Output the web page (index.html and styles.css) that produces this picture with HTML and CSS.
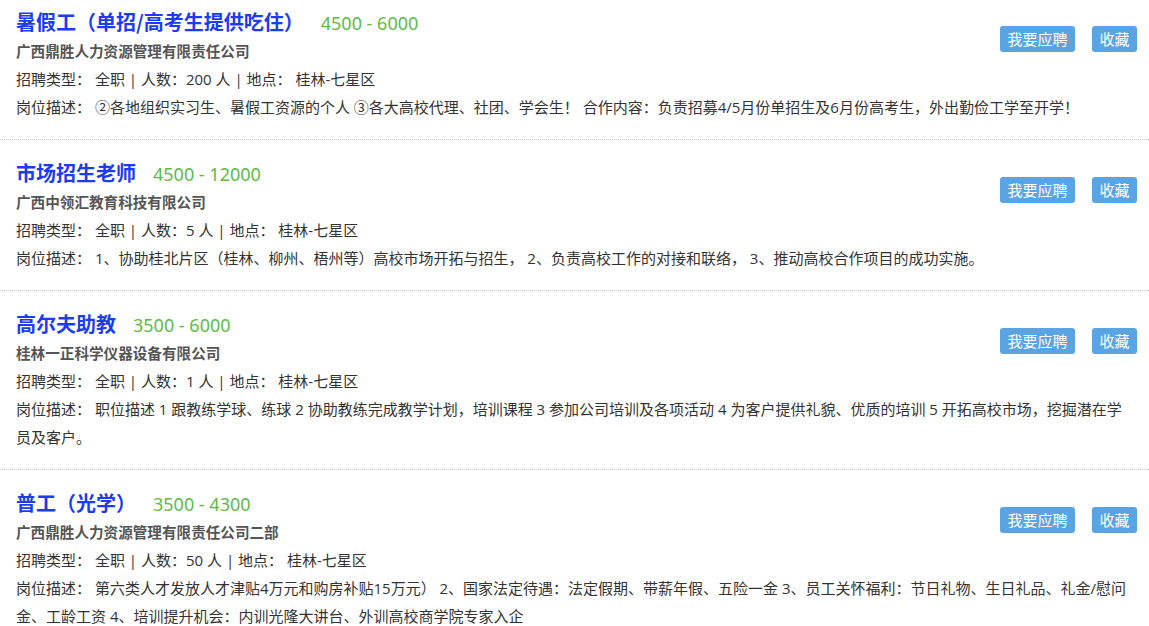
FILE: index.html
```html
<!DOCTYPE html>
<html lang="zh-CN">
<head>
<meta charset="utf-8">
<title>职位列表</title>
<link rel="stylesheet" href="styles.css">
</head>
<body>
<ul class="jobs">
  <li class="job">
    <div class="head">
      <div class="info">
        <div class="title-row"><a class="title">暑假工（单招/高考生提供吃住）</a><span class="salary">4500 - 6000</span></div>
        <div class="company">广西鼎胜人力资源管理有限责任公司</div>
        <div class="meta">招聘类型： 全职 | 人数：200 人 | 地点： 桂林-七星区</div>
      </div>
      <div class="actions"><a class="btn">我要应聘</a><a class="btn">收藏</a></div>
    </div>
    <p class="desc">岗位描述： ②各地组织实习生、暑假工资源的个人 ③各大高校代理、社团、学会生！ 合作内容：负责招募4/5月份单招生及6月份高考生，外出勤俭工学至开学！</p>
  </li>
  <li class="job">
    <div class="head">
      <div class="info">
        <div class="title-row"><a class="title">市场招生老师</a><span class="salary">4500 - 12000</span></div>
        <div class="company">广西中领汇教育科技有限公司</div>
        <div class="meta">招聘类型： 全职 | 人数：5 人 | 地点： 桂林-七星区</div>
      </div>
      <div class="actions"><a class="btn">我要应聘</a><a class="btn">收藏</a></div>
    </div>
    <p class="desc">岗位描述： 1、协助桂北片区（桂林、柳州、梧州等）高校市场开拓与招生， 2、负责高校工作的对接和联络， 3、推动高校合作项目的成功实施。</p>
  </li>
  <li class="job">
    <div class="head">
      <div class="info">
        <div class="title-row"><a class="title">高尔夫助教</a><span class="salary">3500 - 6000</span></div>
        <div class="company">桂林一正科学仪器设备有限公司</div>
        <div class="meta">招聘类型： 全职 | 人数：1 人 | 地点： 桂林-七星区</div>
      </div>
      <div class="actions"><a class="btn">我要应聘</a><a class="btn">收藏</a></div>
    </div>
    <p class="desc">岗位描述： 职位描述 1 跟教练学球、练球 2 协助教练完成教学计划，培训课程 3 参加公司培训及各项活动 4 为客户提供礼貌、优质的培训 5 开拓高校市场，挖掘潜在学员及客户。</p>
  </li>
  <li class="job">
    <div class="head">
      <div class="info">
        <div class="title-row"><a class="title">普工（光学）</a><span class="salary">3500 - 4300</span></div>
        <div class="company">广西鼎胜人力资源管理有限责任公司二部</div>
        <div class="meta">招聘类型： 全职 | 人数：50 人 | 地点： 桂林-七星区</div>
      </div>
      <div class="actions"><a class="btn">我要应聘</a><a class="btn">收藏</a></div>
    </div>
    <p class="desc">岗位描述： 第六类人才发放人才津贴4万元和购房补贴15万元） 2、国家法定待遇：法定假期、带薪年假、五险一金 3、员工关怀福利：节日礼物、生日礼品、礼金/慰问金、工龄工资 4、培训提升机会：内训光隆大讲台、外训高校商学院专家入企</p>
  </li>
</ul>
</body>
</html>
```

FILE: styles.css
```css
html, body {
  margin: 0;
  padding: 0;
  background: #fff;
}
body {
  font-family: "Open Sans", "Noto Sans CJK SC", "Noto Sans", sans-serif;
  color: #333;
  font-size: 15px;
  overflow: hidden;
}
.jobs {
  list-style: none;
  margin: 0;
  padding: 0;
}
.job {
  padding: 18px 12px 18px 16px;
  border-bottom: 1px dotted #c8c8c8;
}
.job:first-child {
  padding-top: 7px;
}
.head {
  display: flex;
  justify-content: space-between;
  align-items: flex-start;
}
.title-row {
  display: flex;
  align-items: baseline;
  height: 30px;
  line-height: 30px;
}
.title {
  font-family: "Noto Sans CJK SC", sans-serif;
  font-size: 20px;
  font-weight: bold;
  color: #1b3cf2;
  text-decoration: none;
}
.salary {
  font-size: 18px;
  color: #5dbb46;
  margin-left: 17px;
  font-family: "Noto Sans", "Noto Sans CJK SC", sans-serif;
}
.company {
  font-family: "Noto Sans CJK SC", sans-serif;
  font-weight: bold;
  color: #555;
  font-size: 14.6px;
  line-height: 28px;
}
.meta {
  line-height: 28px;
}
.actions {
  display: flex;
  gap: 17px;
  margin-top: 19px;
}
.btn {
  display: block;
  background: #5ba4e3;
  color: #fff;
  font-family: "Noto Sans CJK SC", sans-serif;
  font-size: 15px;
  line-height: 26px;
  height: 26px;
  padding: 0 7.5px;
  border-radius: 3px;
}
.desc {
  margin: 0 6px 0 0;
  line-height: 28px;
}
```
